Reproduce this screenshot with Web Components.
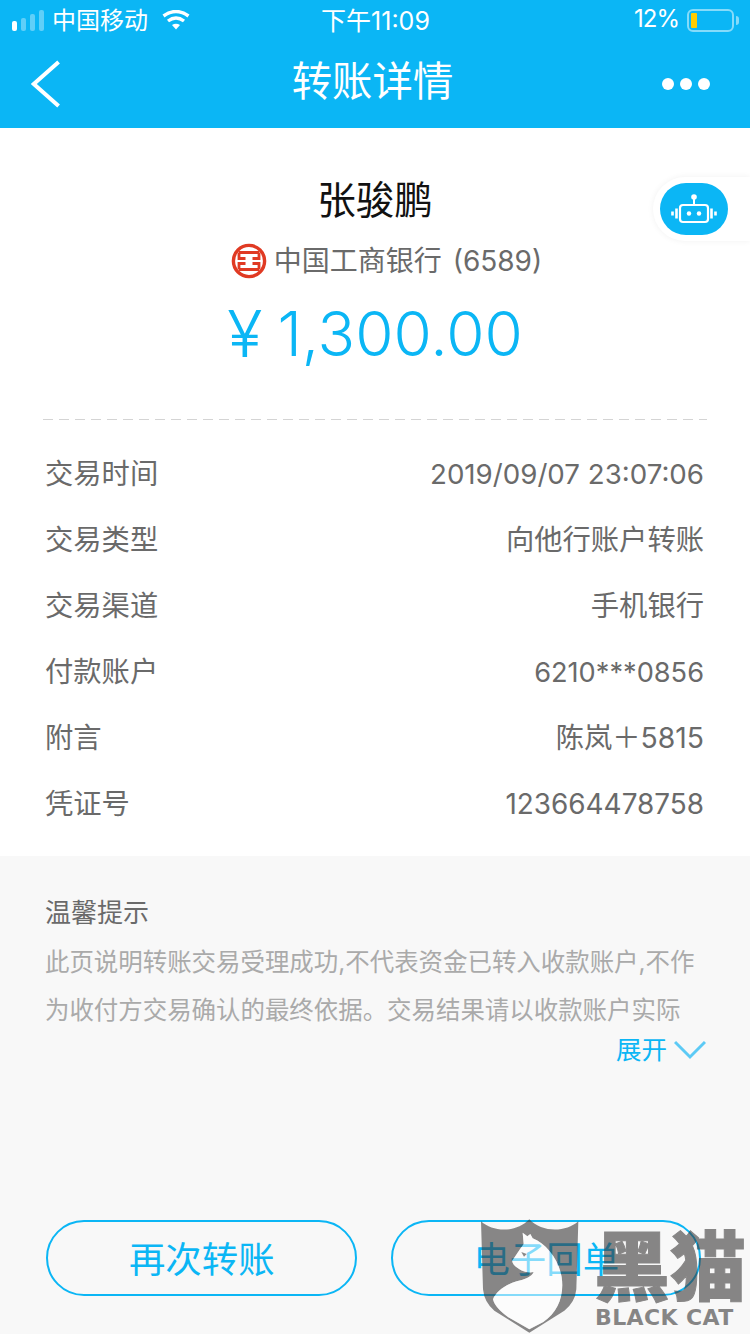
<!DOCTYPE html>
<html lang="zh">
<head>
<meta charset="utf-8">
<title>转账详情</title>
<style>
  html, body { margin: 0; padding: 0; }
  body {
    width: 750px;
    height: 1334px;
    overflow: hidden;
    position: relative;
    background: #f8f8f8;
    font-family: Inter, "Noto Sans CJK SC", sans-serif;
    display: flex;
    flex-direction: column;
  }
</style>
</head>
<body>
  <status-bar></status-bar>
  <nav-bar>转账详情</nav-bar>
  <transfer-card name="张骏鹏" bank="中国工商银行 (6589)" amount="1,300.00">
    <detail-row label="交易时间" digits style="--val-size:27.7px">2019/09/07 23:07:06</detail-row>
    <detail-row label="交易类型">向他行账户转账</detail-row>
    <detail-row label="交易渠道">手机银行</detail-row>
    <detail-row label="付款账户" digits style="--val-size:27.2px">6210***0856</detail-row>
    <detail-row label="附言">陈岚＋5815</detail-row>
    <detail-row label="凭证号" digits style="--val-size:27.9px">123664478758</detail-row>
  </transfer-card>
  <tip-panel heading="温馨提示">此页说明转账交易受理成功,不代表资金已转入收款账户,不作<br>为收付方交易确认的最终依据。交易结果请以收款账户实际</tip-panel>
  <action-bar>
    <action-button>再次转账</action-button>
    <action-button>电子回单</action-button>
  </action-bar>
  <robot-badge></robot-badge>
  <black-cat-mark></black-cat-mark>

<script>
class StatusBar extends HTMLElement {
  constructor() {
    super();
    this.attachShadow({ mode: 'open' });
    this.shadowRoot.innerHTML = `
      <style>
        :host {
          display: grid;
          grid-template-columns: 1fr auto 1fr;
          align-items: center;
          height: 40px;
          padding: 0 11px 0 12px;
          background: #0bb6f5;
          color: #fff;
          font-size: 24px;
        }
        .left, .right { display: flex; align-items: center; }
        .right { justify-content: flex-end; }
        .signal { display: flex; align-items: flex-end; gap: 4px; height: 21px; margin-right: 8px; }
        .signal i { display: block; width: 5px; border-radius: 2px; background: rgba(255,255,255,.35); }
        .signal i:nth-child(1) { height: 10px; background: #fff; }
        .signal i:nth-child(2) { height: 13px; }
        .signal i:nth-child(3) { height: 17px; }
        .signal i:nth-child(4) { height: 21px; }
        .wifi { margin-left: 14px; }
        .up { padding-bottom: 3px; }
        .time { font-size: 25px; padding-bottom: 3px; }
        .pct { font-size: 24px; letter-spacing: -1px; margin-right: 8px; padding-bottom: 3px; }
        .battery {
          width: 47px; height: 23px; box-sizing: border-box;
          border: 2px solid rgba(255,255,255,.5); border-radius: 6px;
          padding: 2px;
        }
        .battery b { display: block; width: 6px; height: 15px; background: #ffcc00; border-radius: 1px; }
        .nub { width: 3px; height: 9px; margin-left: 2px; background: rgba(255,255,255,.5); border-radius: 0 3px 3px 0; }
      </style>
      <div class="left">
        <div class="signal"><i></i><i></i><i></i><i></i></div>
        <span class="up">中国移动</span>
        <svg class="wifi" width="28" height="20" viewBox="0 0 28 20" fill="none" stroke="#fff">
          <path d="M1.5 6 Q14 -3 26.5 6" stroke-width="3.4"/>
          <path d="M6 11 Q14 5 22 11" stroke-width="3.4"/>
          <path d="M10 15 Q14 12.5 18 15 L14 19.5 Z" fill="#fff" stroke="none"/>
        </svg>
      </div>
      <div class="time">下午11:09</div>
      <div class="right">
        <span class="pct">12%</span>
        <div class="battery"><b></b></div>
        <div class="nub"></div>
      </div>`;
  }
}

class NavBar extends HTMLElement {
  constructor() {
    super();
    this.attachShadow({ mode: 'open' });
    this.shadowRoot.innerHTML = `
      <style>
        :host {
          display: grid;
          grid-template-columns: 1fr auto 1fr;
          align-items: center;
          height: 88px;
          padding: 0 40px 0 31px;
          background: #0bb6f5;
          color: #fff;
          font-size: 40.4px;
        }
        .title { padding: 0 0 11px 4px; }
        .dots { display: flex; justify-content: flex-end; gap: 6px; }
        .dots i { width: 12px; height: 12px; border-radius: 50%; background: #fff; }
        svg { display: block; }
      </style>
      <svg width="30" height="48" viewBox="0 0 30 48" fill="none" stroke="#fff" stroke-width="4">
        <path d="M27.6 2 L2.8 24 L27.6 46"/>
      </svg>
      <div class="title"><slot></slot></div>
      <div class="dots"><i></i><i></i><i></i></div>`;
  }
}

class TransferCard extends HTMLElement {
  constructor() {
    super();
    this.attachShadow({ mode: 'open' });
    this.shadowRoot.innerHTML = `
      <style>
        :host { display: block; background: #fff; padding: 47px 0 20px; }
        .head { display: flex; flex-direction: column; align-items: center; }
        .name { font-size: 38.6px; line-height: 50px; color: #111; }
        .bank { display: flex; align-items: center; gap: 7px; margin-top: 16px; padding-left: 23px; font-size: 28px; word-spacing: 3px; line-height: 40px; color: #6a6a6a; }
        .amount { display: flex; align-items: center; margin-top: 13px; font-size: 62px; font-weight: 300; line-height: 80px; color: #0bb6f5; }
        .yen { margin-right: 15px; font-size: 65px; }
        .rule {
          height: 1px;
          margin: 45px 43px 20px;
          background: repeating-linear-gradient(90deg, #d4d4d4 0 10px, transparent 10px 16px);
        }
        .rows { padding: 0 46px 0 45px; }
      </style>
      <div class="head">
        <div class="name"></div>
        <div class="bank">
          <svg width="36" height="36" viewBox="-18 -18 36 36" fill="none" stroke="#e03a23">
            <circle r="15.6" stroke-width="3.4"/>
            <path d="M-10 -8.5 H10 M-10 -8.5 V-2.5 H-3.5 M10 -8.5 V-2.5 H3.5 M-10 8.5 H10 M-10 8.5 V2.5 H-3.5 M10 8.5 V2.5 H3.5" stroke-width="2.8"/>
          </svg>
          <span class="bank-name"></span>
        </div>
        <div class="amount"><span class="yen">¥</span><span class="value"></span></div>
      </div>
      <div class="rule"></div>
      <div class="rows"><slot></slot></div>`;
  }
  connectedCallback() {
    this.shadowRoot.querySelector('.name').textContent = this.getAttribute('name');
    this.shadowRoot.querySelector('.bank-name').textContent = this.getAttribute('bank');
    this.shadowRoot.querySelector('.value').textContent = this.getAttribute('amount');
  }
}

class DetailRow extends HTMLElement {
  constructor() {
    super();
    this.attachShadow({ mode: 'open' });
    this.shadowRoot.innerHTML = `
      <style>
        :host {
          display: flex;
          justify-content: space-between;
          align-items: center;
          height: 66px;
          font-size: 28.3px;
          color: #6a6a6a;
        }
        .label, .val { padding-bottom: 4px; }
        .val { font-size: var(--val-size, 28.3px); }
        :host([digits]) .val { padding: 2px 0 0; }
      </style>
      <span class="label"></span>
      <span class="val"><slot></slot></span>`;
  }
  connectedCallback() {
    this.shadowRoot.querySelector('.label').textContent = this.getAttribute('label');
  }
}

class TipPanel extends HTMLElement {
  constructor() {
    super();
    this.attachShadow({ mode: 'open' });
    this.shadowRoot.innerHTML = `
      <style>
        :host { display: block; flex: 1; padding: 36px 44px 0 45px; }
        h3 { margin: 0; padding-top: 1px; font-weight: 400; font-size: 26px; line-height: 39px; color: #6a6a6a; }
        .body { margin-top: 6px; font-size: 24.45px; line-height: 48px; color: #aaa; white-space: nowrap; }
        .more { display: flex; justify-content: flex-end; align-items: center; gap: 7px; margin-top: -2px; font-size: 25.5px; line-height: 36px; color: #0bb6f5; }
        svg { display: block; }
      </style>
      <h3></h3>
      <div class="body"><slot></slot></div>
      <div class="more">
        <span>展开</span>
        <svg width="32" height="20" viewBox="0 0 32 20" fill="none" stroke="#5ccaf5" stroke-width="3"><path d="M1 2 L16 17 L31 2"/></svg>
      </div>`;
  }
  connectedCallback() {
    this.shadowRoot.querySelector('h3').textContent = this.getAttribute('heading');
  }
}

class ActionBar extends HTMLElement {
  constructor() {
    super();
    this.attachShadow({ mode: 'open' });
    this.shadowRoot.innerHTML = `
      <style>
        :host { display: flex; gap: 34px; padding: 0 49px 38px 46px; }
      </style>
      <slot></slot>`;
  }
}

class ActionButton extends HTMLElement {
  constructor() {
    super();
    this.attachShadow({ mode: 'open' });
    this.shadowRoot.innerHTML = `
      <style>
        :host {
          flex: 1;
          display: flex;
          justify-content: center;
          align-items: center;
          height: 76px;
          box-sizing: border-box;
          padding: 0 0 3px 1px;
          border: 2px solid #0bb6f5;
          border-radius: 38px;
          font-size: 36.4px;
          color: #0bb6f5;
        }
      </style>
      <slot></slot>`;
  }
}

class RobotBadge extends HTMLElement {
  constructor() {
    super();
    this.attachShadow({ mode: 'open' });
    this.shadowRoot.innerHTML = `
      <style>
        :host {
          position: absolute;
          left: 653px;
          top: 177px;
          width: 97px;
          height: 64px;
          box-sizing: border-box;
          padding: 6px 0 0 7px;
          background: #fff;
          border-radius: 32px 0 0 32px;
          box-shadow: 0 0 6px rgba(0,0,0,.06);
        }
        .pill {
          width: 68px;
          height: 52px;
          border-radius: 26px;
          background: #0bb6f5;
          display: flex;
          align-items: center;
          justify-content: center;
        }
      </style>
      <div class="pill">
        <svg width="46" height="32" viewBox="0 0 46 32" fill="none" stroke="#fff">
          <circle cx="23" cy="4" r="2.8" fill="#fff" stroke="none"/>
          <path d="M23 6 V12" stroke-width="2"/>
          <rect x="9" y="12" width="28" height="17" rx="3" stroke-width="2.2"/>
          <circle cx="18" cy="20.5" r="2.2" fill="#fff" stroke="none"/>
          <circle cx="28" cy="20.5" r="2.2" fill="#fff" stroke="none"/>
          <path d="M5.5 15.5 V25.5 M40.5 15.5 V25.5" stroke-width="2.6"/>
          <path d="M1.5 18.5 V22.5 M44.5 18.5 V22.5" stroke-width="2.6"/>
        </svg>
      </div>`;
  }
}

class BlackCatMark extends HTMLElement {
  constructor() {
    super();
    this.attachShadow({ mode: 'open' });
    this.shadowRoot.innerHTML = `
      <style>
        :host {
          position: absolute;
          left: 475px;
          top: 1212px;
          width: 275px;
          height: 122px;
          pointer-events: none;
          color: #3c3a3a;
        }
        svg { position: absolute; left: 0; top: 0; }
        .cn {
          position: absolute; left: 119px; top: 8px;
          font-family: "Noto Sans CJK SC", sans-serif;
          font-weight: 900; font-size: 76px; line-height: 84px; white-space: nowrap;
          -webkit-text-stroke: 1px #3c3a3a;
          opacity: .6;
        }
        .en {
          position: absolute; left: 120px; top: 92px;
          font-family: "DejaVu Sans", sans-serif;
          font-weight: 700;
          font-size: 22px; line-height: 28px; letter-spacing: .4px; white-space: nowrap;
          opacity: .6;
        }
      </style>
      <svg width="110" height="122" viewBox="0 0 330 366">
        <path fill-rule="evenodd" fill="rgba(60,58,58,.6)" d="M18 28 C55 62 125 62 163 22 C200 62 272 62 310 28 L304 232 Q300 272 268 296 L163 362 L58 296 Q28 272 24 232 Z
          M143 62 L157 73 L166 66 L173 79 C215 97 250 140 260 195 C268 250 250 300 205 330 L163 352 L100 316 C75 298 58 280 54 262 C62 240 90 218 125 208 C150 202 170 195 176 180 C160 184 140 178 128 168 C118 162 110 152 112 145 C122 132 130 118 146 96 Z"/>
        <path fill="rgba(255,255,255,.5)" d="M143 62 L157 73 L166 66 L173 79 C215 97 250 140 260 195 C268 250 250 300 205 330 L163 352 L100 316 C75 298 58 280 54 262 C62 240 90 218 125 208 C150 202 170 195 176 180 C160 184 140 178 128 168 C118 162 110 152 112 145 C122 132 130 118 146 96 Z"/>
        <path d="M139 120 L155 126 L147 134 Z" fill="rgba(60,58,58,.6)"/>
      </svg>
      <span class="cn">黑猫</span>
      <span class="en">BLACK CAT</span>`;
  }
}

customElements.define('status-bar', StatusBar);
customElements.define('nav-bar', NavBar);
customElements.define('transfer-card', TransferCard);
customElements.define('detail-row', DetailRow);
customElements.define('tip-panel', TipPanel);
customElements.define('action-bar', ActionBar);
customElements.define('action-button', ActionButton);
customElements.define('robot-badge', RobotBadge);
customElements.define('black-cat-mark', BlackCatMark);
</script>
</body>
</html>
